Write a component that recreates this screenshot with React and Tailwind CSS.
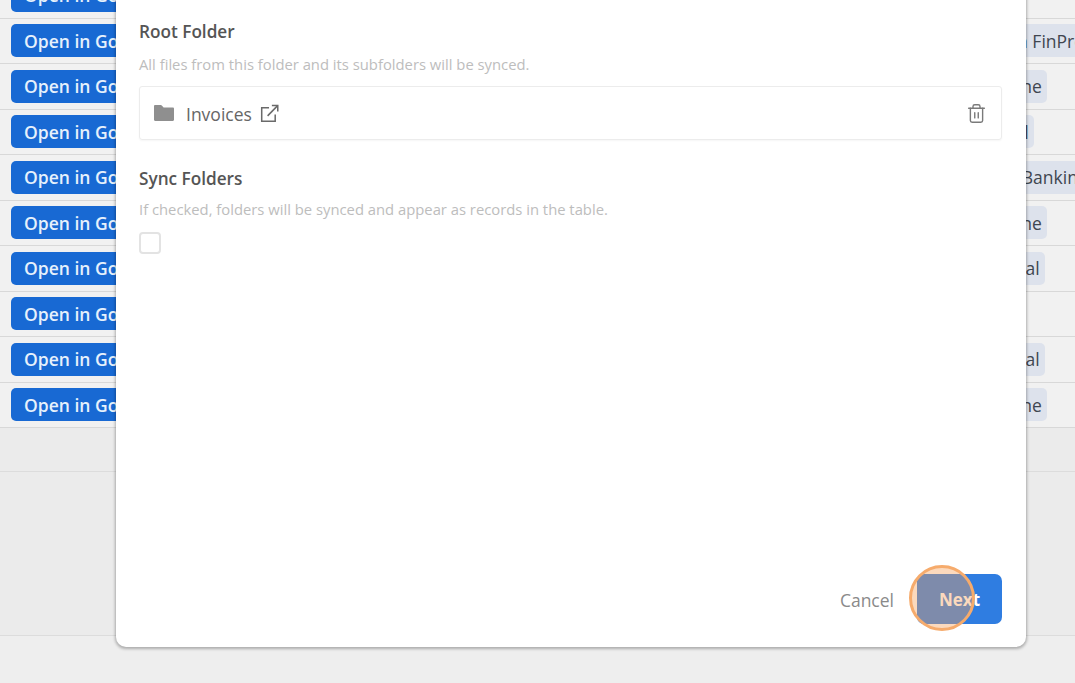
import React from 'react';
import { Trash2 } from 'lucide-react';

const rows = [
  { id: 0, tag: null },
  { id: 1, tag: 'Cash FinPro' },
  { id: 2, tag: 'Online' },
  { id: 3, tag: 'Total' },
  { id: 4, tag: 'Net Banking' },
  { id: 5, tag: 'Online' },
  { id: 6, tag: 'Rental' },
  { id: 7, tag: null },
  { id: 8, tag: 'Rental' },
  { id: 9, tag: 'Online' },
];

function Row({ tag }) {
  return (
    <div className="flex h-[45.5px] shrink-0 items-center border-b border-[#d8d8d8] bg-[#f1f1f1] pl-[11px]">
      <div className="w-[971px] shrink-0">
        <button className="h-[33px] w-[130px] overflow-hidden whitespace-nowrap rounded-[5px] bg-[#1869d3] pl-[13px] text-left text-[17.5px] font-semibold text-[#e6f1fc]">
          Open in Google Drive
        </button>
      </div>
      {tag && (
        <span className="flex h-[33px] shrink-0 items-center whitespace-nowrap rounded-[5px] bg-[#dde2ec] pl-[6px] pr-[5px] text-[17.5px] text-[#3f4650]">
          {tag}
        </span>
      )}
    </div>
  );
}

function FolderIcon() {
  return (
    <svg width="22" height="18" viewBox="0 0 22 18" fill="#8f8f8f">
      <path d="M1 2.2C1 1.5 1.5 1 2.2 1h5.6c.4 0 .7.2 1 .5L10.6 3.4h9.2c.7 0 1.2.5 1.2 1.2v11.2c0 .7-.5 1.2-1.2 1.2H2.2c-.7 0-1.2-.5-1.2-1.2V2.2z" />
    </svg>
  );
}

function OpenIcon() {
  return (
    <svg className="ml-[8px]" width="19" height="19" viewBox="0 0 20 20" fill="none" stroke="#6a6a6a" strokeWidth="1.6">
      <path d="M9.5 4H1.8v14.2H16V11" />
      <path d="M8 12.5 18.3 2" />
      <path d="M12.5 1.6h6.2v6.2" />
    </svg>
  );
}

export default function App() {
  return (
    <div className="relative h-[683px] w-[1075px] overflow-hidden bg-[#eeeeee] font-['Open_Sans',sans-serif]">
      <div className="-mt-[27px] flex flex-col">
        {rows.map((r) => (
          <Row key={r.id} tag={r.tag} />
        ))}
      </div>
      <div className="h-[44px] border-b border-[#dcdcdc] bg-[#ebebeb]" />
      <div className="h-[164px] border-b border-[#dcdcdc] bg-[#ebebeb]" />

      {/* modal */}
      <div className="absolute bottom-[36px] left-[116px] top-[-20px] flex w-[910px] flex-col rounded-b-[10px] bg-white pb-[23px] pl-[23px] pr-[24px] pt-[40px] shadow-[0_1px_3px_1px_rgba(0,0,0,0.28)]">
        <h3 className="text-[17.2px] font-semibold leading-[24px] text-[#555555]">Root Folder</h3>
        <p className="mt-[10px] text-[14.8px] leading-[20px] text-[#bdbdbd]">
          All files from this folder and its subfolders will be synced.
        </p>
        <div className="mt-[12px] flex h-[54px] items-center justify-between rounded-[3px] border border-[#ececec] pl-[13px] pr-[14px] shadow-[0_1px_2px_rgba(0,0,0,0.04)]">
          <div className="flex items-center">
            <FolderIcon />
            <span className="ml-[11px] pt-[2px] text-[17.5px] text-[#666666]">Invoices</span>
            <OpenIcon />
          </div>
          <Trash2 className="h-[21px] w-[21px] text-[#7a7a7a]" strokeWidth={1.6} />
        </div>
        <h3 className="mt-[27px] text-[17.2px] font-semibold leading-[24px] text-[#555555]">Sync Folders</h3>
        <p className="mt-[8px] text-[14.8px] leading-[20px] text-[#bdbdbd]">
          If checked, folders will be synced and appear as records in the table.
        </p>
        <div className="mt-[13px] h-[22px] w-[22px] rounded-[4px] border-2 border-[#e3e3e3] bg-white" />
        <div className="mt-auto flex items-center justify-end">
          <button className="mr-[23px] pt-[2px] text-[17.5px] text-[#8a8a8a]">Cancel</button>
          <button className="h-[50px] w-[85px] rounded-[7px] bg-[#2f7de1] pt-[2px] text-[17px] font-bold text-white">
            Next
          </button>
        </div>
      </div>

      {/* highlight ring over the Next button */}
      <div className="absolute left-[909px] top-[565px] h-[66px] w-[66px] rounded-full border-[3px] border-[#f6ab6c] bg-[#f5a05a]/40" />
    </div>
  );
}
